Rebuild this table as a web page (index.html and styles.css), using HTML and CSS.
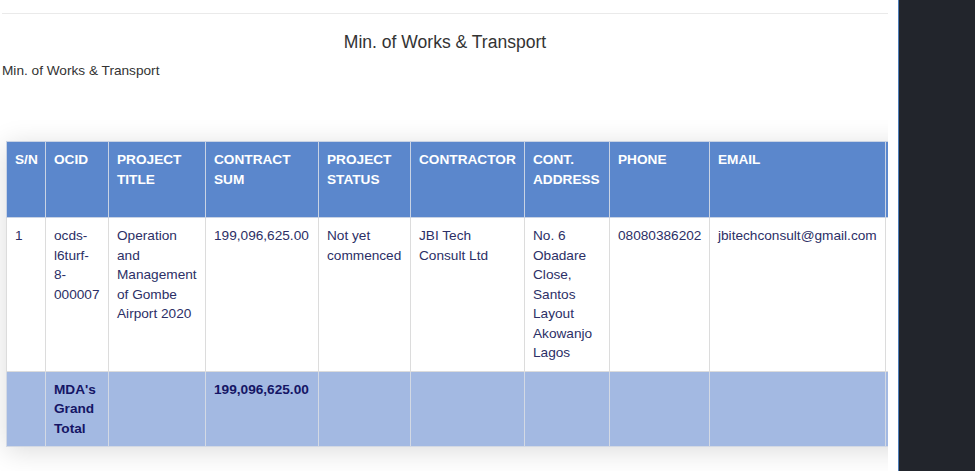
FILE: index.html
```html
<!DOCTYPE html>
<html lang="en">
<head>
<meta charset="utf-8">
<title>Min. of Works &amp; Transport</title>
<link rel="stylesheet" href="styles.css">
</head>
<body>
<div class="page">
  <main class="main">
    <hr class="rule">
    <h2 class="title">Min. of Works &amp; Transport</h2>
    <p class="subtitle">Min. of Works &amp; Transport</p>
    <div class="card">
      <table class="grid">
        <colgroup>
          <col class="c-sn"><col class="c-ocid"><col class="c-title"><col class="c-sum"><col class="c-status"><col class="c-contractor"><col class="c-address"><col class="c-phone"><col class="c-email"><col class="c-extra">
        </colgroup>
        <thead>
          <tr>
            <th>S/N</th>
            <th>OCID</th>
            <th>PROJECT TITLE</th>
            <th>CONTRACT SUM</th>
            <th>PROJECT STATUS</th>
            <th>CONTRACTOR</th>
            <th>CONT. ADDRESS</th>
            <th>PHONE</th>
            <th>EMAIL</th>
            <th></th>
          </tr>
        </thead>
        <tbody>
          <tr>
            <td>1</td>
            <td>ocds-<br>l6turf-<br>8-<br>000007</td>
            <td>Operation and Management of Gombe Airport 2020</td>
            <td>199,096,625.00</td>
            <td>Not yet commenced</td>
            <td>JBI Tech Consult Ltd</td>
            <td>No. 6 Obadare Close, Santos Layout Akowanjo Lagos</td>
            <td>08080386202</td>
            <td>jbitechconsult@gmail.com</td>
            <td></td>
          </tr>
        </tbody>
        <tfoot>
          <tr>
            <td></td>
            <td>MDA's Grand Total</td>
            <td></td>
            <td>199,096,625.00</td>
            <td></td>
            <td></td>
            <td></td>
            <td></td>
            <td></td>
            <td></td>
          </tr>
        </tfoot>
      </table>
    </div>
  </main>
  <div class="gap"></div>
  <aside class="side"></aside>
</div>
</body>
</html>
```

FILE: styles.css
```css
html, body {
  margin: 0;
  padding: 0;
  background: #fff;
  height: 100%;
}
body {
  font-family: "Liberation Sans", Arial, sans-serif;
  font-size: 13.65px;
  line-height: 19.5px;
  color: #333;
  overflow: hidden;
}
.page {
  display: flex;
  height: 471px;
}
.main {
  width: 886px;
  flex: 0 0 886px;
  padding-left: 2px;
  padding-top: 13px;
  overflow: hidden;
}
.gap {
  flex: 0 0 10px;
  background: #fff;
}
.side {
  flex: 1;
  background: #22252c;
  border-left: 1px solid #4d7db8;
}
.rule {
  margin: 0;
  border: 0;
  border-top: 1px solid #eaeaea;
  height: 0;
}
.title {
  margin: 16px 0 0;
  text-align: center;
  font-weight: normal;
  font-size: 17.55px;
  line-height: 25px;
  color: #333;
}
.subtitle {
  margin: 6px 0 0;
  font-size: 13.65px;
  line-height: 20px;
  color: #333;
}
.card {
  margin: 60px 0 0 4px;
  width: 1100px;
  box-shadow: 0 4px 26px rgba(0, 0, 0, 0.14);
  background: #fff;
}
.grid {
  border-collapse: collapse;
  table-layout: fixed;
  width: 1000px;
  border: 1px solid #dcdcdc;
}
.c-sn { width: 39px; }
.c-ocid { width: 63px; }
.c-title { width: 97px; }
.c-sum { width: 113px; }
.c-status { width: 92px; }
.c-contractor { width: 114px; }
.c-address { width: 85px; }
.c-phone { width: 100px; }
.c-email { width: 176px; }
.c-extra { width: 121px; }
.grid th,
.grid td {
  border: 1px solid #dcdcdc;
  padding: 8px;
  text-align: left;
  vertical-align: top;
  overflow: hidden;
}
.grid thead th {
  background: #5b87cc;
  color: #fff;
  font-weight: bold;
  height: 59px;
  border-color: #c9d3e4;
}
.grid tbody td {
  color: #2c2f66;
  background: #fff;
  padding-bottom: 8px;
}
.grid tfoot td {
  background: #a3b9e2;
  color: #151565;
  font-weight: bold;
  border-color: #d3d9e4;
}
```
